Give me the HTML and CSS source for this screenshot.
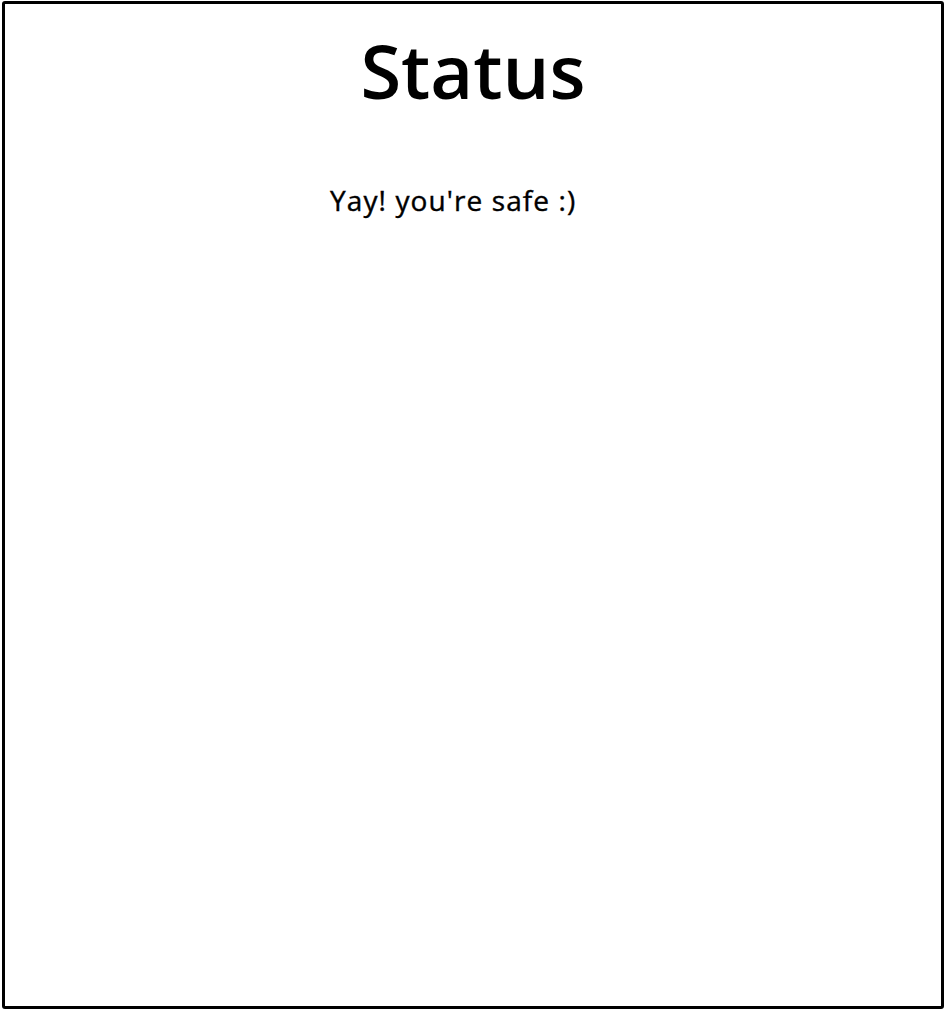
FILE: index.html
```html
<!DOCTYPE html>
<html lang="en">
<head>
<meta charset="utf-8">
<title>Status</title>
<link rel="stylesheet" href="styles.css">
</head>
<body>
<div class="frame">
  <h1 class="title">Status</h1>
  <p class="message">Yay! you're safe :)</p>
</div>
</body>
</html>
```
FILE: styles.css
```css
html, body {
  margin: 0;
  padding: 0;
  background: #fff;
}
body {
  padding: 1px 2px 0 2px;
  font-family: "Open Sans", "Noto Sans", sans-serif;
  color: #000;
}
.frame {
  box-sizing: border-box;
  width: 942px;
  height: 1008px;
  border: 3px solid #000;
  border-radius: 3px;
  display: flex;
  flex-direction: column;
}
.title {
  margin: 17px 0 0 0;
  text-align: center;
  font-size: 74px;
  font-weight: 600;
  line-height: 100px;
}
.message {
  margin: 60px 0 0 325px;
  font-size: 28px;
  font-weight: 500;
  letter-spacing: 1.1px;
  line-height: 38px;
  -webkit-text-stroke: 0.4px #000;
}
```
